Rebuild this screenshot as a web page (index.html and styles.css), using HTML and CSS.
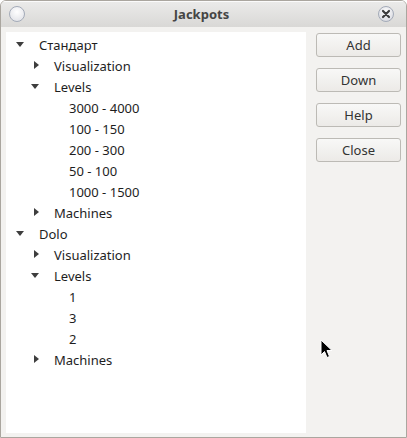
FILE: index.html
```html
<!DOCTYPE html>
<html>
<head>
<meta charset="utf-8">
<link rel="stylesheet" href="styles.css">
</head>
<body>
<div class="window">
  <div class="titlebar">
    <span class="tb-circle"></span>
    <span class="title">Jackpots</span>
    <span class="tb-close">
      <svg width="10" height="10" viewBox="0 0 10 10"><path d="M2 2 L8 8 M8 2 L2 8" stroke="#3c3c3c" stroke-width="2.2" stroke-linecap="round"/></svg>
    </span>
  </div>
  <div class="content">
    <div class="tree">
      <div class="row l0"><span class="arrow down"></span><span class="label">Стандарт</span></div>
      <div class="row l1"><span class="arrow right"></span><span class="label">Visualization</span></div>
      <div class="row l1"><span class="arrow down"></span><span class="label">Levels</span></div>
      <div class="row l2"><span class="arrow none"></span><span class="label">3000 - 4000</span></div>
      <div class="row l2"><span class="arrow none"></span><span class="label">100 - 150</span></div>
      <div class="row l2"><span class="arrow none"></span><span class="label">200 - 300</span></div>
      <div class="row l2"><span class="arrow none"></span><span class="label">50 - 100</span></div>
      <div class="row l2"><span class="arrow none"></span><span class="label">1000 - 1500</span></div>
      <div class="row l1"><span class="arrow right"></span><span class="label">Machines</span></div>
      <div class="row l0"><span class="arrow down"></span><span class="label">Dolo</span></div>
      <div class="row l1"><span class="arrow right"></span><span class="label">Visualization</span></div>
      <div class="row l1"><span class="arrow down"></span><span class="label">Levels</span></div>
      <div class="row l2"><span class="arrow none"></span><span class="label">1</span></div>
      <div class="row l2"><span class="arrow none"></span><span class="label">3</span></div>
      <div class="row l2"><span class="arrow none"></span><span class="label">2</span></div>
      <div class="row l1"><span class="arrow right"></span><span class="label">Machines</span></div>
    </div>
    <div class="buttons">
      <button class="btn">Add</button>
      <button class="btn">Down</button>
      <button class="btn">Help</button>
      <button class="btn">Close</button>
    </div>
  </div>
  <svg class="cursor" width="14" height="22" viewBox="0 0 14 22"><path d="M1 1 L1 16 L4.5 12.5 L7 18.5 L9.5 17.5 L7 11.5 L12 11.5 Z" fill="#000" stroke="#fff" stroke-width="1"/></svg>
</div>
</body>
</html>
```
FILE: styles.css
```css
html, body {
  margin: 0;
  padding: 0;
  background: #ffffff;
}
body {
  width: 407px;
  height: 438px;
  overflow: hidden;
  font-family: "Noto Sans", "Open Sans", sans-serif;
  font-size: 13px;
}
.window {
  position: relative;
  box-sizing: border-box;
  width: 407px;
  height: 438px;
  border: 1px solid #aaa69f;
  border-radius: 6px 6px 0 0;
  background: #f3f2f0;
  display: flex;
  flex-direction: column;
  overflow: hidden;
}
.titlebar {
  height: 26px;
  flex: none;
  display: flex;
  align-items: center;
  justify-content: space-between;
  padding: 0 12px 0 8px;
  background: linear-gradient(#ebebea, #d9d8d6);
  box-shadow: inset 0 1px 0 #fbfbfb;
}
.tb-circle {
  width: 16px;
  height: 16px;
  border-radius: 50%;
  border: 1px solid #a3aab8;
  background: radial-gradient(circle at 50% 35%, #ffffff, #e7e8ec 70%);
  box-sizing: border-box;
}
.title {
  font-weight: bold;
  color: #454545;
  font-size: 13px;
}
.tb-close {
  width: 16px;
  height: 16px;
  border-radius: 50%;
  border: 1px solid #a3aab8;
  background: radial-gradient(circle at 50% 35%, #ffffff, #dcdde3 75%);
  box-sizing: border-box;
  display: flex;
  align-items: center;
  justify-content: center;
}
.content {
  flex: 1;
  display: flex;
  gap: 10px;
  padding: 5px 5px 4px 5px;
}
.tree {
  width: 300px;
  background: #ffffff;
  padding-top: 2px;
  color: #1e1e1e;
}
.row {
  height: 21px;
  display: flex;
  align-items: center;
}
.row.l0 { padding-left: 10px; }
.row.l1 { padding-left: 25px; }
.row.l2 { padding-left: 40px; }
.arrow {
  width: 9px;
  height: 9px;
  margin-right: 14px;
  position: relative;
  flex: none;
}
.arrow.down::before {
  content: "";
  position: absolute;
  left: 0;
  top: 2px;
  border-left: 4.5px solid transparent;
  border-right: 4.5px solid transparent;
  border-top: 5px solid #3e3e3e;
}
.arrow.right::before {
  content: "";
  position: absolute;
  left: 3px;
  top: 0;
  border-top: 4.5px solid transparent;
  border-bottom: 4.5px solid transparent;
  border-left: 5px solid #3e3e3e;
}
.label {
  white-space: nowrap;
}
.buttons {
  flex: 1;
  display: flex;
  flex-direction: column;
  gap: 11px;
  padding-top: 1px;
}
.btn {
  height: 24px;
  font-family: inherit;
  font-size: 13px;
  color: #333333;
  border: 1px solid #bcbab5;
  border-radius: 3px;
  background: linear-gradient(#f8f8f7, #eceae7);
  padding: 0;
}
.cursor {
  position: absolute;
  left: 319px;
  top: 338px;
}
```
